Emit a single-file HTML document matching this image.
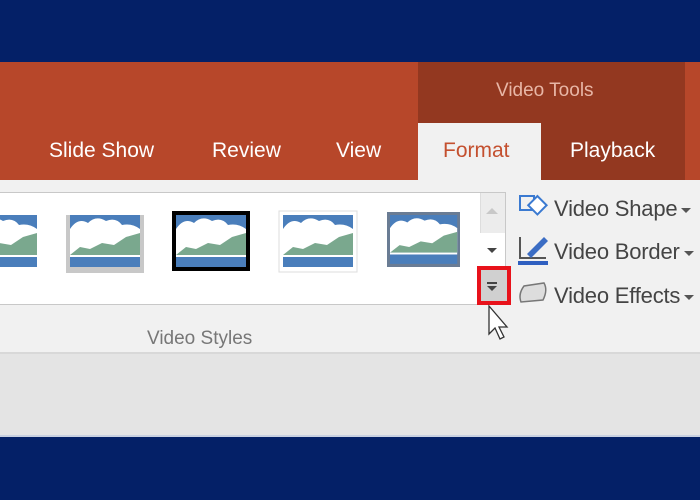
<!DOCTYPE html>
<html><head><style>
*{margin:0;padding:0;box-sizing:border-box}
body{width:700px;height:500px;overflow:hidden;position:relative;background:#e4e4e4;font-family:"Liberation Sans",sans-serif}
.a{position:absolute}
.tab{position:absolute;top:139px;font-size:21px;color:#fff}
.lbl{position:absolute;font-size:22px;color:#444;letter-spacing:-0.2px;white-space:nowrap}
.dd{display:inline-block;vertical-align:middle;margin-left:4px;border-left:5px solid transparent;border-right:5px solid transparent;border-top:5px solid #555}
</style></head><body>
<div class="a" style="left:0;top:0;width:700px;height:62px;background:#042067"></div>
<div class="a" style="left:0;top:62px;width:700px;height:118px;background:#b7472a"></div>
<div class="a" style="left:418px;top:62px;width:267px;height:118px;background:#933820"></div>
<div class="a" style="left:496px;top:80px;font-size:19px;color:#e8b6a6">Video Tools</div>
<div class="a" style="left:418px;top:123px;width:123px;height:60px;background:#f1f1f1"></div>
<div class="tab" style="left:49px">Slide Show</div>
<div class="tab" style="left:212px">Review</div>
<div class="tab" style="left:336px">View</div>
<div class="tab" style="left:443px;color:#c4502f">Format</div>
<div class="tab" style="left:570px">Playback</div>
<div class="a" style="left:0;top:180px;width:700px;height:174px;background:#f1f1f1;border-bottom:2px solid #d8d8d8"></div>
<div class="a" style="left:0;top:192px;width:506px;height:113px;background:#fff;border:1px solid #c8c8c8;border-left:none"></div>
<div class="a" style="left:480px;top:193px;width:25px;height:40px;background:#ececec;border-left:1px solid #ddd"></div>
<div class="a" style="left:486px;top:208px;width:0;height:0;border-left:6px solid transparent;border-right:6px solid transparent;border-bottom:6px solid #c8c8c8"></div>
<div class="a" style="left:487px;top:248px;width:0;height:0;border-left:5px solid transparent;border-right:5px solid transparent;border-top:5px solid #444"></div>
<div class="a" style="left:477px;top:266px;width:34px;height:39px;background:#d0d0d0;border:4px solid #e8121b"></div>
<div class="a" style="left:487px;top:282px;width:10px;height:2px;background:#444"></div>
<div class="a" style="left:487px;top:286px;width:0;height:0;border-left:5px solid transparent;border-right:5px solid transparent;border-top:5px solid #444"></div>
<svg class="a" style="left:0;top:0" width="700" height="500">
<defs><g id="t"><rect width="70" height="52" fill="#4a7ebb"/><path d="M0 40 V14 Q8 2 18 8 Q26 0 36 6 Q46 2 52 10 Q62 8 70 14 V40Z" fill="#fff"/><path d="M0 40 L10 32 L20 34 L32 28 L44 30 L56 22 L70 18 V40Z" fill="#7aa88e"/><rect y="40" width="70" height="2" fill="#fff"/></g></defs>
<g transform="translate(-33,215)"><use href="#t"/></g>
<rect x="66" y="215" width="78" height="58" fill="#c8c8c8"/>
<g transform="translate(70,215)"><use href="#t"/></g>
<rect x="172" y="211" width="78" height="60" fill="#000"/>
<g transform="translate(176,215)"><use href="#t"/></g>
<rect x="279" y="211" width="78" height="61" fill="#fff" stroke="#ddd"/>
<g transform="translate(283,215)"><use href="#t"/></g>
<rect x="387" y="212" width="73" height="55" fill="#6a7c94"/>
<g transform="translate(390,215) scale(0.96,0.94)"><use href="#t"/></g>
<path d="M489 306 L489 334 L495 328 L500 339 L504 337 L499 327 L507 327 Z" fill="#fff" stroke="#333" stroke-width="1.3"/>
<rect x="520" y="196" width="14" height="14" fill="none" stroke="#3b7ad1" stroke-width="2"/>
<rect x="530" y="198" width="13" height="13" transform="rotate(45 536 206)" fill="#fff" stroke="#3b7ad1" stroke-width="2"/>
<path d="M520 237 V258 H546" fill="none" stroke="#555" stroke-width="2"/>
<path d="M527 254 L544 237 L548 241 L531 258 Z" fill="#3b6dc4"/>
<rect x="518" y="261" width="30" height="4" fill="#2f5fc0"/>
<path d="M521 302 Q518 294 524 286 L544 283 Q548 290 543 300 Z" fill="#ddd" stroke="#777" stroke-width="1.5"/>
</svg>
<div class="lbl" style="left:554px;top:196px">Video Shape<span class="dd"></span></div>
<div class="lbl" style="left:554px;top:239px">Video Border<span class="dd"></span></div>
<div class="lbl" style="left:554px;top:283px">Video Effects<span class="dd"></span></div>
<div class="a" style="left:147px;top:328px;font-size:19px;color:#777">Video Styles</div>
<div class="a" style="left:0;top:435px;width:700px;height:2px;background:#c8d0e0"></div>
<div class="a" style="left:0;top:437px;width:700px;height:63px;background:#042067"></div>
</body></html>
